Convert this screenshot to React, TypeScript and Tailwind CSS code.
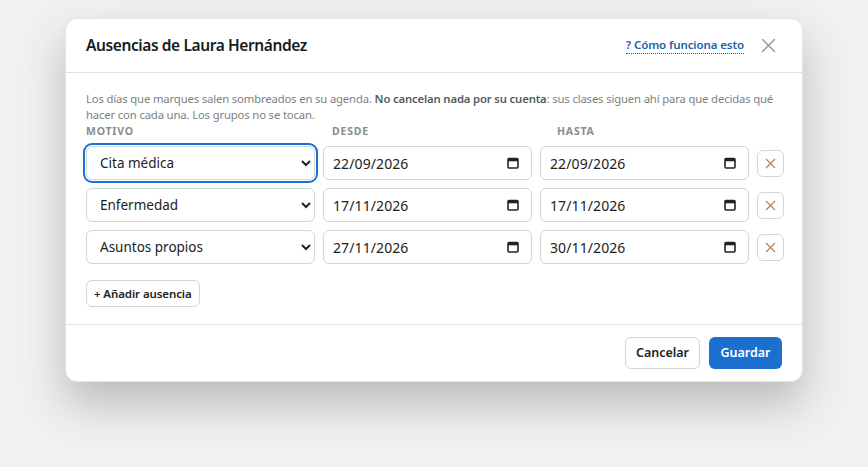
import { FC } from 'react';

type Absence = { reason: string; from: string; to: string };

const absences: Absence[] = [
	{ reason: 'Cita médica', from: '22/09/2026', to: '22/09/2026' },
	{ reason: 'Enfermedad', from: '17/11/2026', to: '17/11/2026' },
	{ reason: 'Asuntos propios', from: '27/11/2026', to: '30/11/2026' },
];

const reasons = ['Cita médica', 'Enfermedad', 'Asuntos propios', 'Vacaciones', 'Otro'];

const CalendarIcon: FC = () => (
	<svg width="12" height="12" viewBox="0 0 12 12" className="shrink-0">
		<rect x="1" y="1.5" width="10" height="9.5" rx="1" fill="none" stroke="#1f2424" strokeWidth="1.6" />
		<rect x="1" y="1.5" width="10" height="2.8" fill="#1f2424" />
	</svg>
);

const DateField: FC<{ value: string }> = ({ value }) => (
	<div className="flex h-[34px] items-center justify-between rounded-md border border-[#cfd7d7] bg-white pl-[9px] pr-[12px] text-[14px] text-[#1c2222]">
		<span className="tracking-[0.1px]">{value}</span>
		<CalendarIcon />
	</div>
);

const App: FC = () => {
	return (
		<div className="min-h-[467px] w-full bg-[#f1f2f0] pt-[18px]" style={{ fontFamily: '"Noto Sans", "Liberation Sans", sans-serif' }}>
			<div className="mx-auto w-[738px] overflow-hidden rounded-xl border border-[#e1e5e4] bg-white shadow-[0_22px_44px_rgba(40,45,40,0.28)]">
				{/* header */}
				<div className="flex h-[54px] items-center justify-between border-b border-[#dde3e3] pl-5 pr-[24px]">
					<h2 className="text-[15.5px] font-semibold tracking-[-0.4px] text-[#161c1c]">Ausencias de Laura Hernández</h2>
					<div className="flex items-center gap-[14px]">
						<a href="#" className="border-b border-dotted border-[#1d5fa8] pb-[1px] text-[11.5px] font-semibold leading-[15px] tracking-[-0.1px] text-[#1d5fa8]">? Cómo funciona esto</a>
						<button type="button" className="flex h-5 w-5 items-center justify-center text-[#8b9292]">
							<svg width="15" height="15" viewBox="0 0 15 15">
								<path d="M1.5 1.5 L13.5 13.5 M13.5 1.5 L1.5 13.5" stroke="currentColor" strokeWidth="1.3" strokeLinecap="round" />
							</svg>
						</button>
					</div>
				</div>

				{/* body */}
				<div className="px-5 pt-[18px] pb-[17px]">
					<p className="text-[11.3px] leading-[16px] tracking-[-0.15px] text-[#7b8282]">
						Los días que marques salen sombreados en su agenda. <strong className="font-semibold text-[#555c5c]">No cancelan nada por su cuenta</strong>: sus clases siguen ahí para que decidas qué hacer con cada una. Los grupos no se tocan.
					</p>
					<div className="mt-[1px] grid grid-cols-[246px_225px_1fr] text-[10.5px] font-bold leading-[14px] tracking-[0.8px] text-[#868d8d]">
						<span>MOTIVO</span>
						<span>DESDE</span>
						<span>HASTA</span>
					</div>

					<div className="mt-[8px] flex flex-col gap-[8px]">
						{absences.map((a, i) => (
							<div key={i} className="grid grid-cols-[229px_209px_209px_27px] items-center gap-x-2">
								<select
									defaultValue={a.reason}
									className={`h-[34px] w-full rounded-md border border-[#cfd7d7] bg-white pl-[9px] pr-[8px] text-[13.5px] text-[#1c2222] ${i === 0 ? 'outline-2 outline-offset-1 outline-[#1a6fcf]' : ''}`}
								>
									{reasons.map(r => (
										<option key={r} value={r}>{r}</option>
									))}
								</select>
								<DateField value={a.from} />
								<DateField value={a.to} />
								<button type="button" className="flex h-[27px] w-[27px] items-center justify-center rounded-md border border-[#cfd7d7] bg-white text-[#b0814d]">
									<svg width="11" height="11" viewBox="0 0 11 11">
										<path d="M1 1 L10 10 M10 1 L1 10" stroke="currentColor" strokeWidth="1.1" />
									</svg>
								</button>
							</div>
						))}
					</div>

					<button type="button" className="mt-[16px] h-[27px] rounded-md border border-[#cfd7d7] bg-white px-[7px] text-[11.5px] font-semibold tracking-[-0.1px] text-[#1c2222]">
						+ Añadir ausencia
					</button>
				</div>

				{/* footer */}
				<div className="flex items-center justify-end gap-[9px] border-t border-[#dde3e3] px-5 pt-[12px] pb-[12px]">
					<button type="button" className="h-[32px] w-[75px] rounded-md border border-[#cfd7d7] bg-white text-[12.5px] font-semibold text-[#1c2222]">Cancelar</button>
					<button type="button" className="h-[32px] w-[73px] rounded-md bg-[#1a6fcf] text-[12.5px] font-semibold text-white">Guardar</button>
				</div>
			</div>
		</div>
	);
};

export default App;
